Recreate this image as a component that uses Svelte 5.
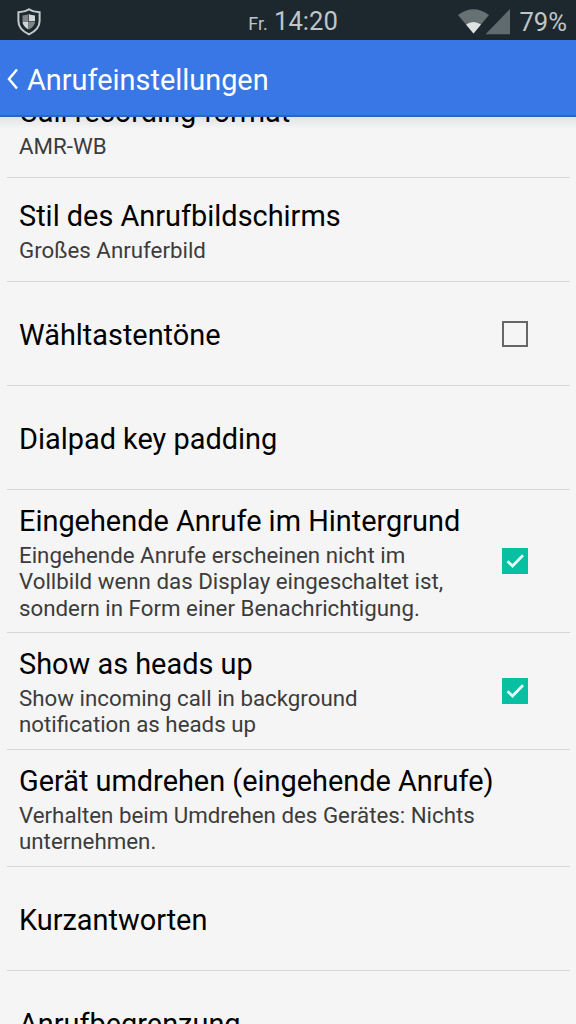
<script lang="ts">
  type Preference = {
    title: string;
    summary?: string[];
    checkbox?: boolean;
    checked?: boolean;
  };

  let preferences: Preference[] = $state([
    { title: "Call recording format", summary: ["AMR-WB"] },
    { title: "Stil des Anrufbildschirms", summary: ["Großes Anruferbild"] },
    { title: "Wähltastentöne", checkbox: true, checked: false },
    { title: "Dialpad key padding" },
    {
      title: "Eingehende Anrufe im Hintergrund",
      summary: [
        "Eingehende Anrufe erscheinen nicht im",
        "Vollbild wenn das Display eingeschaltet ist,",
        "sondern in Form einer Benachrichtigung.",
      ],
      checkbox: true,
      checked: true,
    },
    {
      title: "Show as heads up",
      summary: ["Show incoming call in background", "notification as heads up"],
      checkbox: true,
      checked: true,
    },
    {
      title: "Gerät umdrehen (eingehende Anrufe)",
      summary: ["Verhalten beim Umdrehen des Gerätes: Nichts", "unternehmen."],
    },
    { title: "Kurzantworten" },
    { title: "Anrufbegrenzung" },
  ]);
</script>

<div class="screen">
  <div class="status">
    <svg class="shield" width="24" height="28" viewBox="0 0 24 28">
      <path
        d="M12 1.300C9 3.200 5.500 4 1.400 4.200V13c0 6.200 4.500 10.600 10.600 13.400C18.100 23.600 22.600 19.200 22.600 13V4.200C18.500 4 15 3.200 12 1.300Z"
        fill="none"
        stroke="#c3c9cb"
        stroke-width="2" />
      <path d="M11.500 6C9.500 7 7.500 7.400 5.500 7.500V13h6Z" fill="#7d8588" />
      <path d="M12 6c2 1 4 1.400 6 1.500V13h-6Z" fill="#cfd4d6" />
      <path d="M5.500 13.500h6V21.500C8 19.500 5.500 17 5.500 13.500Z" fill="#cfd4d6" />
      <path d="M12 13.500h6c0 3.500-2.500 6-6 8Z" fill="#7d8588" />
    </svg>
    <div class="clock"><span class="day">Fr.</span> 14:20</div>
    <div class="indicators">
      <svg width="54" height="26" viewBox="0 0 54 26">
        <path d="M0 6Q15.500-5.500 31 6L15.500 24.500Z" fill="#667174" />
        <path d="M8 15.500Q15.500 10.500 23 15.500L15.500 24.500Z" fill="#dfe3e4" />
        <path d="M52 0V25.300H27.500Z" fill="#606b70" />
      </svg>
      <span class="battery">79%</span>
    </div>
  </div>

  <header>
    <svg width="12" height="22" viewBox="0 0 12 22">
      <path d="M10 1.500L2 11L10 20.500" fill="none" stroke="#fff" stroke-width="2.500" />
    </svg>
    <h1>Anrufeinstellungen</h1>
  </header>

  <main>
    <ul>
      {#each preferences as pref}
        <li>
          <div class="text">
            <div class="title">{pref.title}</div>
            {#if pref.summary}
              <div class="summary">
                {#each pref.summary as line}
                  <div>{line}</div>
                {/each}
              </div>
            {/if}
          </div>
          {#if pref.checkbox}
            <button
              class="box"
              class:checked={pref.checked}
              aria-label={pref.title}
              onclick={() => (pref.checked = !pref.checked)}>
              {#if pref.checked}
                <svg width="26" height="26" viewBox="0 0 26 26">
                  <path d="M5.500 13.200L10.500 18L21 7.200" fill="none" stroke="#e6fffa" stroke-width="2.700" />
                </svg>
              {/if}
            </button>
          {/if}
        </li>
      {/each}
    </ul>
  </main>
</div>

<style>
  :global(body) {
    margin: 0;
    overflow: hidden;
  }

  .screen {
    display: flex;
    flex-direction: column;
    width: 576px;
    height: 1024px;
    overflow: hidden;
    background: #f5f5f5;
    color: #000;
    font-family: Roboto, sans-serif;
  }

  .status {
    display: grid;
    grid-template-columns: 1fr auto 1fr;
    align-items: center;
    flex: none;
    box-sizing: border-box;
    height: 40px;
    padding: 0 9px 0 17px;
    background: #1c282d;
    color: #bfc5c8;
    font-size: 25.600px;
  }

  .clock {
    margin-right: -2px;
    line-height: 40px;
    white-space: nowrap;
    padding-top: 1px;
  }

  .day {
    font-size: 18px;
  }

  .indicators {
    display: flex;
    align-items: center;
    justify-content: flex-end;
    gap: 7px;
  }

  .battery {
    padding-bottom: 1px;
  }

  header {
    display: flex;
    align-items: center;
    flex: none;
    gap: 8px;
    box-sizing: border-box;
    height: 77px;
    padding: 3px 0 0 7px;
    border-bottom: 2px solid #3364bd;
    background: #3a77e6;
    color: #fff;
  }

  h1 {
    margin: 0;
    padding-top: 1px;
    font-size: 28.900px;
    font-weight: 400;
  }

  main {
    flex: 1;
    min-height: 0;
    overflow: hidden;
    background: linear-gradient(#e2e3e6, #f5f5f5 12px);
  }

  ul {
    margin: -43px 0 0;
    padding: 0 6px 0 7px;
    list-style: none;
  }

  li {
    display: flex;
    align-items: center;
    justify-content: space-between;
    box-sizing: border-box;
    min-height: 104px;
    padding: 14.200px 42px 11.200px 12px;
    border-bottom: 1px solid #d6d6d6;
  }

  .text {
    white-space: nowrap;
  }

  .title {
    font-size: 28.900px;
    line-height: 34px;
  }

  .summary {
    margin-top: 3.600px;
    color: #3c3c3c;
    font-size: 22.300px;
    line-height: 26.400px;
  }

  .box {
    flex: none;
    box-sizing: border-box;
    width: 26px;
    height: 26px;
    margin-top: -3px;
    padding: 0;
    border: 2px solid #666;
    background: none;
  }

  .box.checked {
    border: none;
    background: #08bfa1;
  }

  .box svg {
    display: block;
  }
</style>
